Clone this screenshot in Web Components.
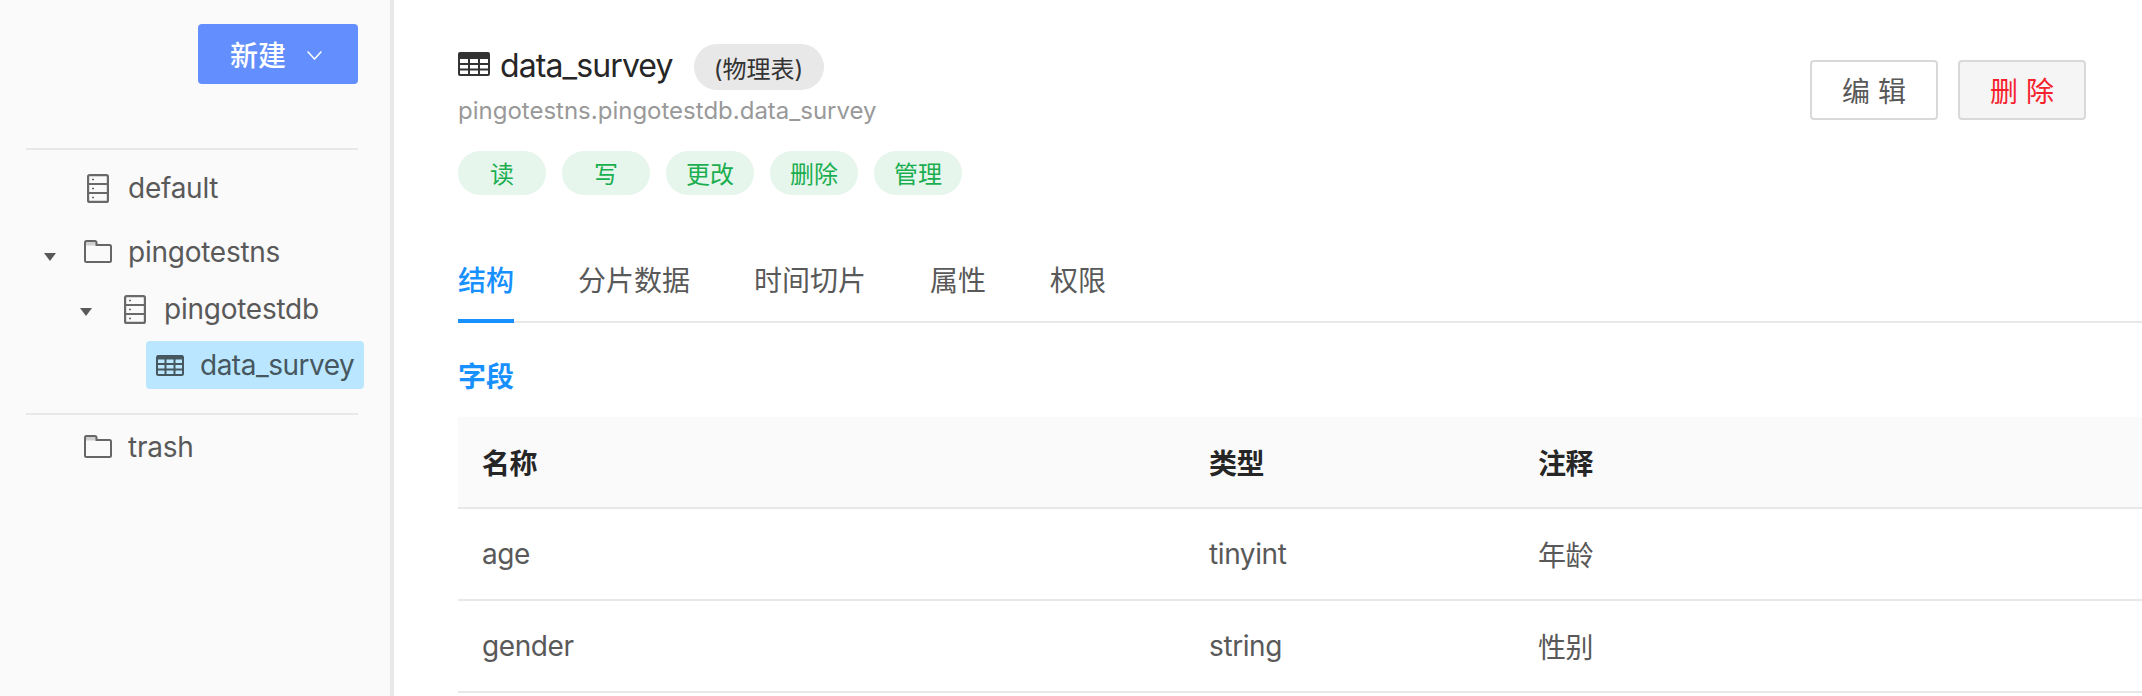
<!DOCTYPE html>
<html lang="zh">
<head>
<meta charset="utf-8">
<title>data_survey</title>
<style>
html,body{margin:0;padding:0;height:100%;background:#fff;overflow:hidden}
body{font-family:Inter,"Noto Sans CJK SC",sans-serif;color:#595959}
</style>
</head>
<body>
<app-shell>
  <side-bar slot="side">
    <new-button slot="action">新建</new-button>
    <tree-row icon="db" indent="0" style="margin-top:14px">default</tree-row>
    <tree-row icon="folder" indent="0" caret style="margin-top:16px">pingotestns</tree-row>
    <tree-row icon="db" indent="1" caret style="margin-top:9px">pingotestdb</tree-row>
    <tree-row icon="table" indent="2" selected style="margin-top:8px">data_survey</tree-row>
    <side-divider></side-divider>
    <tree-row icon="folder" indent="0" style="margin-top:8px">trash</tree-row>
  </side-bar>
  <detail-view slot="main">
    <page-head>
      <span slot="title">data_survey</span>
      <span slot="kind">(物理表)</span>
      <span slot="path">pingotestns.pingotestdb.data_survey</span>
      <perm-chip slot="chips">读</perm-chip>
      <perm-chip slot="chips">写</perm-chip>
      <perm-chip slot="chips">更改</perm-chip>
      <perm-chip slot="chips">删除</perm-chip>
      <perm-chip slot="chips">管理</perm-chip>
      <action-button slot="actions">编 辑</action-button>
      <action-button slot="actions" danger>删 除</action-button>
    </page-head>
    <tab-bar>
      <tab-item active>结构</tab-item>
      <tab-item>分片数据</tab-item>
      <tab-item>时间切片</tab-item>
      <tab-item>属性</tab-item>
      <tab-item>权限</tab-item>
    </tab-bar>
    <section-title>字段</section-title>
    <field-table>
      <field-row head><span>名称</span><span>类型</span><span>注释</span></field-row>
      <field-row><span>age</span><span>tinyint</span><span>年龄</span></field-row>
      <field-row><span>gender</span><span>string</span><span>性别</span></field-row>
    </field-table>
  </detail-view>
</app-shell>
<script>
const ICONS={
  db:`<svg width="22" height="29" viewBox="0 0 22 29" fill="none" stroke="#696969" stroke-width="2.2"><rect x="1.100" y="1.100" width="19.800" height="26.800" rx="1.500"/><path d="M1 10h20M1 19h20"/><path d="M5 5.500h2M5 14.500h2M5 23.500h2" stroke-width="1.600"/></svg>`,
  folder:`<svg width="28" height="23" viewBox="0 0 28 23" fill="none" stroke="#666" stroke-width="2"><rect x="2" y="2" width="10" height="3.500" fill="#cfcfcf" stroke="none"/><path d="M2.500 1H11a1.500 1.500 0 0 1 1.500 1.500V5h13A1.500 1.500 0 0 1 27 6.500v14a1.500 1.500 0 0 1-1.500 1.500h-23A1.500 1.500 0 0 1 1 20.500v-18A1.500 1.500 0 0 1 2.500 1z"/></svg>`,
  table:`<svg width="28" height="21" viewBox="0 0 28 21" fill="none" stroke="#47575f" stroke-width="2"><rect x="1" y="1" width="26" height="19" rx="1.500"/><path d="M1 2.500h26" stroke-width="4"/><path d="M1 9h26M1 14.500h26M9.500 4v16M18.500 4v16"/></svg>`
};
function def(name,html){
  customElements.define(name,class extends HTMLElement{
    constructor(){super();this.attachShadow({mode:'open'});}
    connectedCallback(){if(!this.shadowRoot.firstChild)this.shadowRoot.innerHTML=typeof html==='function'?html(this):html;}
  });
}
def('app-shell',`<style>:host{display:flex;height:696px;width:100%;overflow:hidden}</style><slot name="side"></slot><slot name="main"></slot>`);
def('side-bar',`<style>
:host{display:block;box-sizing:border-box;width:394px;height:696px;flex:none;background:#fafafa;border-right:4px solid #e8e8e8;padding-top:24px}
.top{display:flex;justify-content:flex-end;padding-right:32px;margin-bottom:64px}
.rule{height:2px;background:#e8e8e8;margin:0 32px 0 26px}
</style><div class="top"><slot name="action"></slot></div><div class="rule"></div><slot></slot>`);
def('side-divider',`<style>:host{display:block;height:2px;background:#e8e8e8;margin:24px 32px 0 26px}</style>`);
def('new-button',`<style>
:host{display:flex;align-items:center;box-sizing:border-box;width:160px;height:60px;padding-left:32px;background:#638ffe;border-radius:4px;color:#fff;font-size:28px;font-weight:500}
svg{margin-left:21px;margin-top:2px}
</style><slot></slot><svg width="15" height="9" viewBox="0 0 15 9" fill="none" stroke="#fff" stroke-width="1.500"><path d="M.6.6l6.900 7.400L14.400.6"/></svg>`);
def('tree-row',el=>{
  const ind=+el.getAttribute('indent')||0, sel=el.hasAttribute('selected'), caret=el.hasAttribute('caret');
  const icon=el.getAttribute('icon');
  const boxLeft=[84,120,146][ind];
  const gap=icon==='db'?(ind===0?19:18):16;
  return `<style>
:host{display:flex;height:48px;font-size:28px;color:#595959;line-height:48px;letter-spacing:${sel?-0.5:-0.25}px;position:relative}
.caret{position:absolute;left:${boxLeft-40}px;top:${ind===1?23:25}px;width:0;height:0;border-style:solid;border-color:#595959 transparent transparent;border-width:8px 6.5px 0}
.in{display:flex;align-items:center;height:48px;box-sizing:border-box;margin-left:${boxLeft}px;${sel?'background:#bae7ff;border-radius:4px;padding:0 10px;color:#47575f;':''}}
.ic{display:flex;margin-right:${gap}px;${icon==='db'?'margin-left:'+(ind===0?3:4)+'px;':''}${icon==='folder'?'margin-top:-2px;':''}}
</style>${caret?'<i class="caret"></i>':''}<div class="in"><span class="ic">${ICONS[icon]}</span><slot></slot></div>`;
});
def('detail-view',`<style>:host{display:block;flex:1;min-width:0;padding:44px 0 0 64px;box-sizing:border-box}</style><slot></slot>`);
def('page-head',`<style>
:host{display:flex;justify-content:space-between;align-items:flex-start;padding-right:56px}
.row{display:flex;align-items:center;height:46px}
svg{margin-top:-6px}
.ti{font-size:32px;color:#262626;letter-spacing:-.9px;margin:-4px 21px 0 10px}
.kind{display:flex;align-items:center;justify-content:center;width:130px;height:46px;border-radius:23px;background:#e8e8e8;color:#333;font-size:24px}
.path{font-size:24px;color:#999;line-height:32px;margin-top:5px;margin-bottom:1px}
.chips{display:flex;gap:16px;margin-top:24px;height:44px}
.act{display:flex;gap:20px;margin-top:16px}
</style><div><div class="row">
<svg width="32" height="24" viewBox="0 0 32 24" fill="#333"><path fill-rule="evenodd" d="M2 0h28a2 2 0 0 1 2 2v20a2 2 0 0 1-2 2H2a2 2 0 0 1-2-2V2a2 2 0 0 1 2-2zM2 7v4h8V7zm10 0v4h8V7zm10 0v4h8V7zM2 13v3.500h8V13zm10 0v3.500h8V13zm10 0v3.500h8V13zM2 18.500V22h8v-3.500zm10 0V22h8v-3.500zm10 0V22h8v-3.500z"/></svg>
<span class="ti"><slot name="title"></slot></span><span class="kind"><slot name="kind"></slot></span></div>
<div class="path"><slot name="path"></slot></div>
<div class="chips"><slot name="chips"></slot></div></div>
<div class="act"><slot name="actions"></slot></div>`);
def('perm-chip',`<style>:host{display:flex;align-items:center;justify-content:center;box-sizing:border-box;width:88px;height:44px;padding-bottom:2px;border-radius:22px;background:#e6f6ec;color:#1bae50;font-size:24px}</style><slot></slot>`);
def('action-button',el=>`<style>:host{display:flex;align-items:center;justify-content:center;box-sizing:border-box;width:128px;height:60px;border:2px solid #d9d9d9;border-radius:4px;font-size:28px;background:${el.hasAttribute('danger')?'#f5f5f5':'#fff'};color:${el.hasAttribute('danger')?'#f5222d':'#595959'}}</style><slot></slot>`);
def('tab-bar',`<style>:host{display:flex;gap:64px;height:84px;margin-top:44px;box-sizing:border-box;border-bottom:2px solid #e8e8e8}</style><slot></slot>`);
def('tab-item',el=>`<style>
:host{display:block;box-sizing:border-box;height:84px;line-height:84px;font-size:28px;color:${el.hasAttribute('active')?'#1890ff':'#595959'};${el.hasAttribute('active')?'border-bottom:4px solid #1890ff;font-weight:500;':''}}
</style><slot></slot>`);
def('section-title',`<style>:host{display:block;font-size:28px;font-weight:600;color:#1890ff;line-height:40px;margin-top:34px}</style><slot></slot>`);
def('field-table',`<style>:host{display:block;margin-top:20px}</style><slot></slot>`);
def('field-row',el=>`<style>
:host{display:grid;grid-template-columns:727px 329px 1fr;box-sizing:border-box;height:92px;align-items:center;border-bottom:2px solid #e8e8e8;font-size:28px;letter-spacing:-.4px;${el.hasAttribute('head')?'background:#fafafa;color:#262626;font-weight:600;':'color:#595959;'}}
::slotted(span){padding-left:24px}
</style><slot></slot>`);
</script>
</body>
</html>
